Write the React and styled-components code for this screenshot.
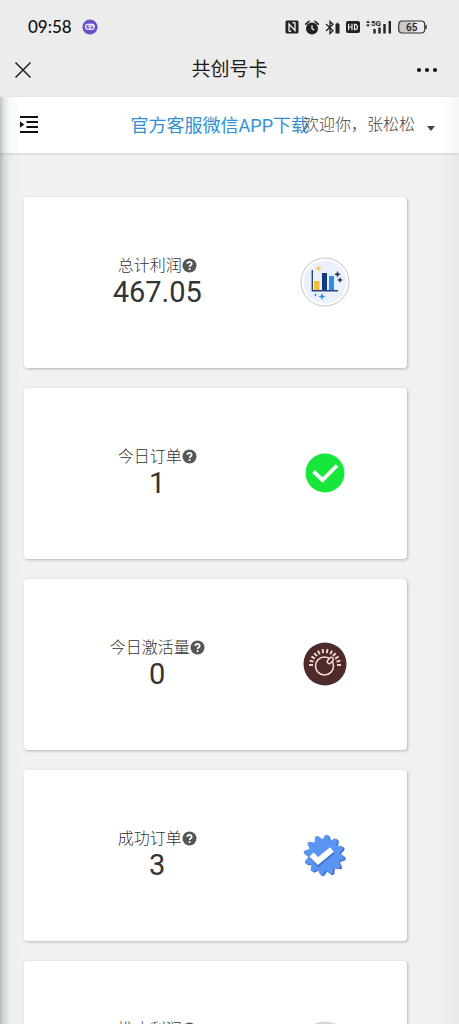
import styled, { createGlobalStyle } from "styled-components";

const GlobalStyle = createGlobalStyle`
  * {
    box-sizing: border-box;
  }

  body {
    margin: 0;
    background: #f1f1f1;
    font-family: Roboto, "Noto Sans CJK SC", sans-serif;
    color: #333;
  }

  button {
    display: flex;
    align-items: center;
    padding: 0;
    border: 0;
    background: none;
    color: inherit;
    font: inherit;
    cursor: pointer;
  }
`;

const Screen = styled.div`
  display: flex;
  flex-direction: column;
  height: 100vh;
  overflow: hidden;
`;

const Chrome = styled.header`
  flex: none;
  background: #ececec;
  color: #1c1c1c;
`;

const StatusBar = styled.div`
  display: flex;
  align-items: center;
  justify-content: space-between;
  height: 42px;
  padding: 12px 32px 0 28px;
`;

const Clock = styled.span`
  font-family: Lato, sans-serif;
  font-size: 17px;
  line-height: 20px;
  font-weight: 500;
  color: #111;
`;

const StatusGroup = styled.div`
  display: flex;
  align-items: center;
  gap: ${({ $gap }) => $gap}px;

  svg {
    display: block;
  }
`;

const TitleBar = styled.div`
  display: grid;
  grid-template-columns: 1fr auto 1fr;
  align-items: center;
  height: 55px;
  padding: 0 14px;

  button:last-child {
    justify-self: end;
    padding-right: 7px;
  }
`;

const Title = styled.h1`
  margin: 0;
  font-size: 19px;
  line-height: 28px;
  font-weight: 400;
`;

const WebView = styled.div`
  position: relative;
  display: flex;
  flex: 1;
  flex-direction: column;
  min-height: 0;
`;

const EdgeShadow = styled.div`
  position: absolute;
  top: 0;
  bottom: 0;
  left: 0;
  width: 20px;
  background: linear-gradient(
    to right,
    rgba(70, 85, 95, 0.36),
    rgba(90, 110, 125, 0.18) 20%,
    rgba(150, 180, 190, 0.07) 50%,
    transparent
  );
  pointer-events: none;
`;

const RightShade = styled(EdgeShadow)`
  right: 0;
  left: auto;
  background: linear-gradient(to left, rgba(120, 145, 170, 0.08), transparent);
`;

const NavBar = styled.nav`
  display: flex;
  flex: none;
  align-items: center;
  height: 56px;
  padding: 0 24px 0 20px;
  background: #fff;
  box-shadow: 0 1px 3px rgba(0, 0, 0, 0.14);
`;

const ServiceLink = styled.a`
  margin-left: auto;
  padding-top: 2px;
  color: #3190d0;
  font-size: 18px;
  line-height: 24px;
  text-decoration: none;
  white-space: nowrap;
`;

const UserMenu = styled.button`
  && {
    flex: none;
    gap: 12px;
    margin-left: -6px;
    color: #444;
    font-size: 16px;
    line-height: 24px;
    font-weight: 300;
    white-space: nowrap;
  }

  svg {
    margin-top: 6px;
  }
`;

const Content = styled.main`
  flex: 1;
  min-height: 0;
  padding: 44px 52px 20px 24px;
  overflow-y: auto;
  scrollbar-width: none;
`;

const CardList = styled.div`
  display: grid;
  gap: 20px;
`;

const Card = styled.section`
  display: grid;
  grid-template-columns: 7fr 3fr;
  align-items: center;
  padding: 57px 32px 58px 16px;
  border-radius: 4px;
  background: #fff;
  box-shadow: 1px 1px 3px rgba(0, 0, 0, 0.26);

  > svg {
    justify-self: center;
  }
`;

const Stat = styled.div`
  padding-bottom: 4px;
  text-align: center;
`;

const Label = styled.h2`
  display: flex;
  align-items: center;
  justify-content: center;
  margin: 0;
  color: #333;
  font-size: 16px;
  line-height: 24px;
  font-weight: 300;
`;

const Value = styled.p`
  margin: 0;
  font-size: 29px;
  line-height: 28px;
`;

const HelpButton = styled.button`
  svg {
    display: block;
    margin-bottom: 2px;
  }
`;

function AppBadge() {
  return (
    <svg width="16" height="16" viewBox="0 0 16 16">
      <circle cx="8" cy="8" r="7.6" fill="#6d4fc9" />
      <path
        d="M8.6 5.2H6A2.500 2.500 0 0 0 6 10.300c2.200 0 2-3.600 4.200-3.600a1.700 1.700 0 0 1 0 3.500M5.800 7.700c1.600 0 1.600-2.600 4.300-2.600a2.700 2.700 0 0 1 0 5.300H7.800"
        fill="none"
        stroke="#fff"
        strokeWidth="1.1"
        strokeLinecap="round"
      />
    </svg>
  );
}

function NfcIcon() {
  return (
    <svg width="14" height="14" viewBox="0 0 14 14">
      <rect x="0.5" y="0.5" width="13" height="13" rx="1.5" fill="#222" />
      <path
        d="M4 11.500V4l6 6.500V2.500M4 11.200h2.200M10 2.800H7.500"
        fill="none"
        stroke="#ececec"
        strokeWidth="1.4"
      />
    </svg>
  );
}

function AlarmIcon() {
  return (
    <svg width="14" height="15" viewBox="0 0 14 15">
      <circle cx="7" cy="8.4" r="6" fill="#222" />
      <path
        d="M.8 4.2 4 1.4M13.2 4.2 10 1.4"
        stroke="#222"
        strokeWidth="1.6"
        strokeLinecap="round"
      />
      <path
        d="M7 5.2v3.4l2.2 1.5"
        fill="none"
        stroke="#ececec"
        strokeWidth="1.3"
      />
    </svg>
  );
}

function BluetoothIcon() {
  return (
    <svg width="15" height="15" viewBox="0 0 15 15">
      <path
        d="m1 4 7 6.800L5 13.500v-12L8 4.300 1 11"
        fill="none"
        stroke="#222"
        strokeWidth="1.3"
      />
      <path d="M10.500 4h1V2.800h2V4h1v9.500h-4z" fill="#222" />
    </svg>
  );
}

function HdIcon() {
  return (
    <svg width="14" height="12" viewBox="0 0 14 12">
      <rect width="14" height="12" rx="2" fill="#222" />
      <path
        d="M2.600 2.800v6.400M6 2.800v6.400M2.600 6H6M8.500 3.400v5.200h.6c3 0 3-5.200 0-5.200z"
        fill="none"
        stroke="#ececec"
        strokeWidth="1.2"
      />
    </svg>
  );
}

function SignalIcon() {
  return (
    <svg width="26" height="16" viewBox="0 0 26 16">
      <path d="m0 4 2-2.500L4 4zM0 5.500h4L2 8z" fill="#222" />
      <text
        x="5"
        y="7"
        fontFamily="Roboto, sans-serif"
        fontSize="8"
        fontWeight="700"
        fill="#222"
      >
        5G
      </text>
      <path
        d="M8.500 10v4.500M13.500 8.500v6M18.500 5v9.500M23.800 2v12.500"
        stroke="#222"
        strokeWidth="2.400"
      />
    </svg>
  );
}

function BatteryIcon() {
  return (
    <svg width="29" height="14" viewBox="0 0 29 14">
      <path d="M4 1.500h13v11H4a3 3 0 0 1-3-3v-5a3 3 0 0 1 3-3z" fill="#c9c9c9" />
      <rect
        x="0.7"
        y="1"
        width="26"
        height="12"
        rx="3.500"
        fill="none"
        stroke="#333"
        strokeWidth="1.200"
      />
      <path d="M28 5v4" stroke="#333" strokeWidth="1.400" />
      <text
        x="13.700"
        y="10.500"
        textAnchor="middle"
        fontFamily="Roboto, sans-serif"
        fontSize="10"
        fontWeight="500"
        fill="#222"
      >
        65
      </text>
    </svg>
  );
}

function CloseIcon() {
  return (
    <svg width="18" height="18" viewBox="0 0 18 18">
      <path d="m1.500 1.500 15 15m0-15-15 15" stroke="#222" strokeWidth="1.500" />
    </svg>
  );
}

function MoreIcon() {
  return (
    <svg width="22" height="6" viewBox="0 0 22 6">
      <circle cx="3" cy="3" r="2.100" fill="#111" />
      <circle cx="11" cy="3" r="2.100" fill="#111" />
      <circle cx="19" cy="3" r="2.100" fill="#111" />
    </svg>
  );
}

function MenuIcon() {
  return (
    <svg width="18" height="18" viewBox="0 0 18 18">
      <path
        d="M0 1h18M6.500 6H18M6.500 11H18M0 16h18"
        stroke="#111"
        strokeWidth="1.800"
      />
      <path d="m0 5.200 4.200 3.300L0 11.800z" fill="#111" />
    </svg>
  );
}

function HelpIcon() {
  return (
    <svg width="15" height="15" viewBox="0 0 15 15">
      <circle cx="7.500" cy="7.500" r="7" fill="#555" />
      <path
        d="M5.300 5.900c.1-2.700 4.600-2.600 4.400 0-.1 1.400-2 1.400-2 3"
        fill="none"
        stroke="#fff"
        strokeWidth="1.700"
      />
      <circle cx="7.600" cy="11" r="1.100" fill="#fff" />
    </svg>
  );
}

function ChartIcon() {
  return (
    <svg width="50" height="50" viewBox="0 0 50 50">
      <circle cx="25" cy="25" r="24" fill="#fff" stroke="#c3c5ca" />
      <circle cx="25" cy="25" r="21.500" fill="#ebf1fb" />
      <path d="M14 24h5.500v9.500H14z" fill="#f5bd38" />
      <path d="M22 16h5v17.500h-5z" fill="#123a82" />
      <path d="M29 19h5v14.500h-5z" fill="#2d8eea" />
      <path d="M12.300 13v20.700H38" fill="none" stroke="#29457f" strokeWidth="1.400" />
      <path d="m18.500 8 1 2.500 2.500 1-2.500 1-1 2.500-1-2.500-2.500-1 2.500-1z" fill="#edc66a" />
      <path
        d="m37.500 14 1 2.300 2.300 1-2.300 1-1 2.300-1-2.300-2.300-1 2.300-1zM40 20l.9 2.100 2.100.9-2.100.9L40 26l-.9-2.100L37 23l2.100-.9z"
        fill="#25376e"
      />
      <path
        d="m22 36 1 2.500 2.500 1-2.500 1-1 2.500-1-2.500-2.500-1 2.500-1zM15.500 36l.5 1.500 1.500.5-1.500.5-.5 1.500-.5-1.500-1.500-.5 1.500-.5z"
        fill="#348fe3"
      />
    </svg>
  );
}

function CheckIcon() {
  return (
    <svg width="40" height="40" viewBox="0 0 40 40">
      <circle cx="20" cy="20" r="19.500" fill="#17e63a" />
      <path
        d="m8.500 18.500 9 8.500L32 12.500"
        fill="none"
        stroke="#fff"
        strokeWidth="3.800"
      />
    </svg>
  );
}

function DialIcon() {
  const ticks = [-90, -74, -58, -42, -26, -9, 9, 26, 42, 58, 74, 90];
  return (
    <svg width="44" height="44" viewBox="0 0 44 44">
      <circle cx="22" cy="22" r="21.500" fill="#4f2a2b" />
      {ticks.map((angle) => (
        <path
          key={angle}
          d="M22 7v4"
          stroke="#f3dfd5"
          strokeWidth="1.900"
          transform={`rotate(${angle} 22 23)`}
        />
      ))}
      <circle cx="21.500" cy="24" r="9" fill="none" stroke="#f3dfd5" strokeWidth="1.500" />
      <rect
        x="25.300"
        y="15"
        width="4"
        height="7"
        rx="2"
        fill="#4f2a2b"
        stroke="#f3dfd5"
        strokeWidth="1.400"
        transform="rotate(43 27.300 18.500)"
      />
    </svg>
  );
}

function BadgeIcon() {
  const teeth = [0, 30, 60, 90, 120, 150, 180, 210, 240, 270, 300, 330];
  const shape = teeth.map((angle) => (
    <path
      key={angle}
      d="m16.500 8 2.800-5.500q1.700-2 3.400 0L25.500 8z"
      transform={`rotate(${angle + 8} 21 22)`}
    />
  ));
  return (
    <svg width="44" height="44" viewBox="0 0 44 44">
      <g fill="#3f6fcb" transform="translate(1.500 1)">
        {shape}
      </g>
      <g fill="#5c94f2">
        {shape}
        <circle cx="21" cy="22" r="16" />
      </g>
      <path d="m9.500 23 6 7L30 18" fill="none" stroke="#3f70cc" strokeWidth="6" />
      <path d="m8.500 21.500 6.500 6.500L29 16.500" fill="none" stroke="#fff" strokeWidth="6" />
    </svg>
  );
}

function CoinIcon() {
  return (
    <svg width="50" height="50" viewBox="0 0 50 50">
      <circle cx="25" cy="25" r="24.500" fill="#d4d4d4" />
      <circle cx="25" cy="27" r="20" fill="#e6e6e6" />
    </svg>
  );
}

const stats = [
  { label: "总计利润", value: "467.05", icon: <ChartIcon /> },
  { label: "今日订单", value: "1", icon: <CheckIcon /> },
  { label: "今日激活量", value: "0", icon: <DialIcon /> },
  { label: "成功订单", value: "3", icon: <BadgeIcon /> },
  { label: "推广利润", value: "0", icon: <CoinIcon /> },
];

function StatCard({ label, value, icon }) {
  return (
    <Card>
      <Stat>
        <Label>
          {label}
          <HelpButton type="button" aria-label={`${label}说明`}>
            <HelpIcon />
          </HelpButton>
        </Label>
        <Value>{value}</Value>
      </Stat>
      {icon}
    </Card>
  );
}

function App() {
  return (
    <Screen>
      <GlobalStyle />
      <Chrome>
        <StatusBar>
          <StatusGroup $gap={10}>
            <Clock>09:58</Clock>
            <AppBadge />
          </StatusGroup>
          <StatusGroup $gap={6}>
            <NfcIcon />
            <AlarmIcon />
            <BluetoothIcon />
            <HdIcon />
            <SignalIcon />
            <BatteryIcon />
          </StatusGroup>
        </StatusBar>
        <TitleBar>
          <button type="button" aria-label="关闭">
            <CloseIcon />
          </button>
          <Title>共创号卡</Title>
          <button type="button" aria-label="更多">
            <MoreIcon />
          </button>
        </TitleBar>
      </Chrome>
      <WebView>
        <NavBar>
          <button type="button" aria-label="菜单">
            <MenuIcon />
          </button>
          <ServiceLink href="#download">官方客服微信APP下载</ServiceLink>
          <UserMenu type="button">
            欢迎你，张松松
            <svg width="8" height="5" viewBox="0 0 8 5">
              <path d="M0 0h8L4 5z" fill="#444" />
            </svg>
          </UserMenu>
        </NavBar>
        <Content>
          <CardList>
            {stats.map((stat) => (
              <StatCard key={stat.label} {...stat} />
            ))}
          </CardList>
        </Content>
        <EdgeShadow />
        <RightShade />
      </WebView>
    </Screen>
  );
}

export default App;
